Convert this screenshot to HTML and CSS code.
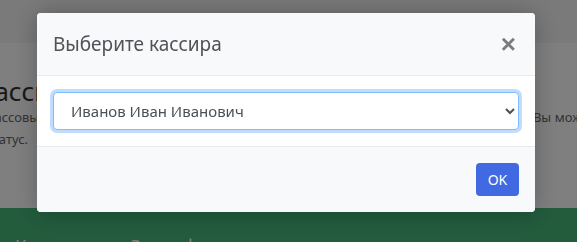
FILE: index.html
```html
<!DOCTYPE html>
<html lang="ru">

<head>
    <meta charset="UTF-8" />
    <title>Касса</title>
    <link rel="stylesheet" href="styles.css">
</head>

<body>
    <!-- Страница под окном -->
    <div class="page">
        <div class="topbar"></div>
        <div class="content">
            <h2 class="page-title">Смена кассира</h2>
            <p class="page-text">Выберите кассовых сотрудников, которые будут работать в текущей смене на этой кассе утром. Вы можете<br>изменить статус.</p>
        </div>
        <div class="green-band">
            <span>Кассир</span>
            <span>Заказ фирмы</span>
        </div>
    </div>

    <!-- Модальное окно -->
    <div class="backdrop">
        <div class="modal">
            <div class="modal-header">
                <h5 class="modal-title">Выберите кассира</h5>
                <button class="close" type="button">&times;</button>
            </div>
            <div class="modal-body">
                <select class="form-control">
                    <option>Иванов Иван Иванович</option>
                    <option>Петров Пётр Петрович</option>
                </select>
            </div>
            <div class="modal-footer">
                <button class="btn" type="button">OK</button>
            </div>
        </div>
    </div>
</body>

</html>
```

FILE: styles.css
```css
html,
body {
    margin: 0;
    padding: 0;
    height: 100%;
    font-family: 'Noto Sans', 'Open Sans', sans-serif;
    overflow: hidden;
}

/* Страница */
.page {
    height: 100%;
    display: flex;
    flex-direction: column;
    background: #fff;
    overflow: hidden;
}

.topbar {
    height: 43px;
    flex-shrink: 0;
    background: #f4f4f4;
}

.content {
    height: 165px;
    flex-shrink: 0;
    padding-top: 33px;
    box-sizing: border-box;
    margin-left: -78px;
    white-space: nowrap;
}

.page-title {
    margin: 0 0 0 -29px;
    font-size: 26px;
    font-weight: 400;
    line-height: 30px;
    color: #333;
}

.page-text {
    margin: 0;
    font-size: 13px;
    line-height: 22px;
    color: #666;
    word-spacing: 0.2px;
}

.green-band {
    flex: 1;
    background: #46b67a;
    padding: 26px 0 0 15px;
    display: flex;
    gap: 55px;
    font-size: 18px;
    color: #fff;
    overflow: hidden;
}

/* Затемнение и окно */
.backdrop {
    position: fixed;
    top: 0;
    left: 0;
    width: 100%;
    height: 100%;
    background: rgba(0, 0, 0, 0.5);
    display: flex;
    justify-content: center;
    align-items: flex-start;
}

.modal {
    width: 498px;
    margin-top: 13px;
    margin-right: 5px;
    background: #fff;
    border-radius: 4px;
    overflow: hidden;
    box-shadow: 0 0 24px rgba(0, 0, 0, 0.25);
}

.modal-header {
    display: flex;
    align-items: center;
    justify-content: space-between;
    padding: 16px 16px;
    background: #f8f9fa;
    border-bottom: 1px solid #e9ecef;
}

.modal-title {
    margin: 0;
    font-size: 19px;
    font-weight: 400;
    line-height: 30px;
    color: #4f5357;
}

.close {
    border: none;
    background: none;
    padding: 0 3px 0 0;
    font-family: 'Liberation Sans', sans-serif;
    font-size: 26px;
    font-weight: 700;
    line-height: 1;
    color: #7a7d80;
    cursor: pointer;
}

.modal-body {
    padding: 16px;
}

.form-control {
    display: block;
    width: 100%;
    height: 38px;
    padding: 0 10px 0 13px;
    font-family: inherit;
    font-size: 15px;
    color: #495057;
    background: #fff;
    border: 1px solid #80bdff;
    border-radius: 4px;
    box-shadow: 0 0 0 3px rgba(0, 123, 255, 0.25);
    outline: none;
}

.modal-footer {
    display: flex;
    justify-content: flex-end;
    padding: 16px;
    background: #f8f9fa;
    border-top: 1px solid #e9ecef;
}

.btn {
    width: 43px;
    height: 33px;
    border: none;
    border-radius: 4px;
    background: #4169e1;
    color: #fff;
    font-family: inherit;
    font-size: 14px;
    cursor: pointer;
}
```
